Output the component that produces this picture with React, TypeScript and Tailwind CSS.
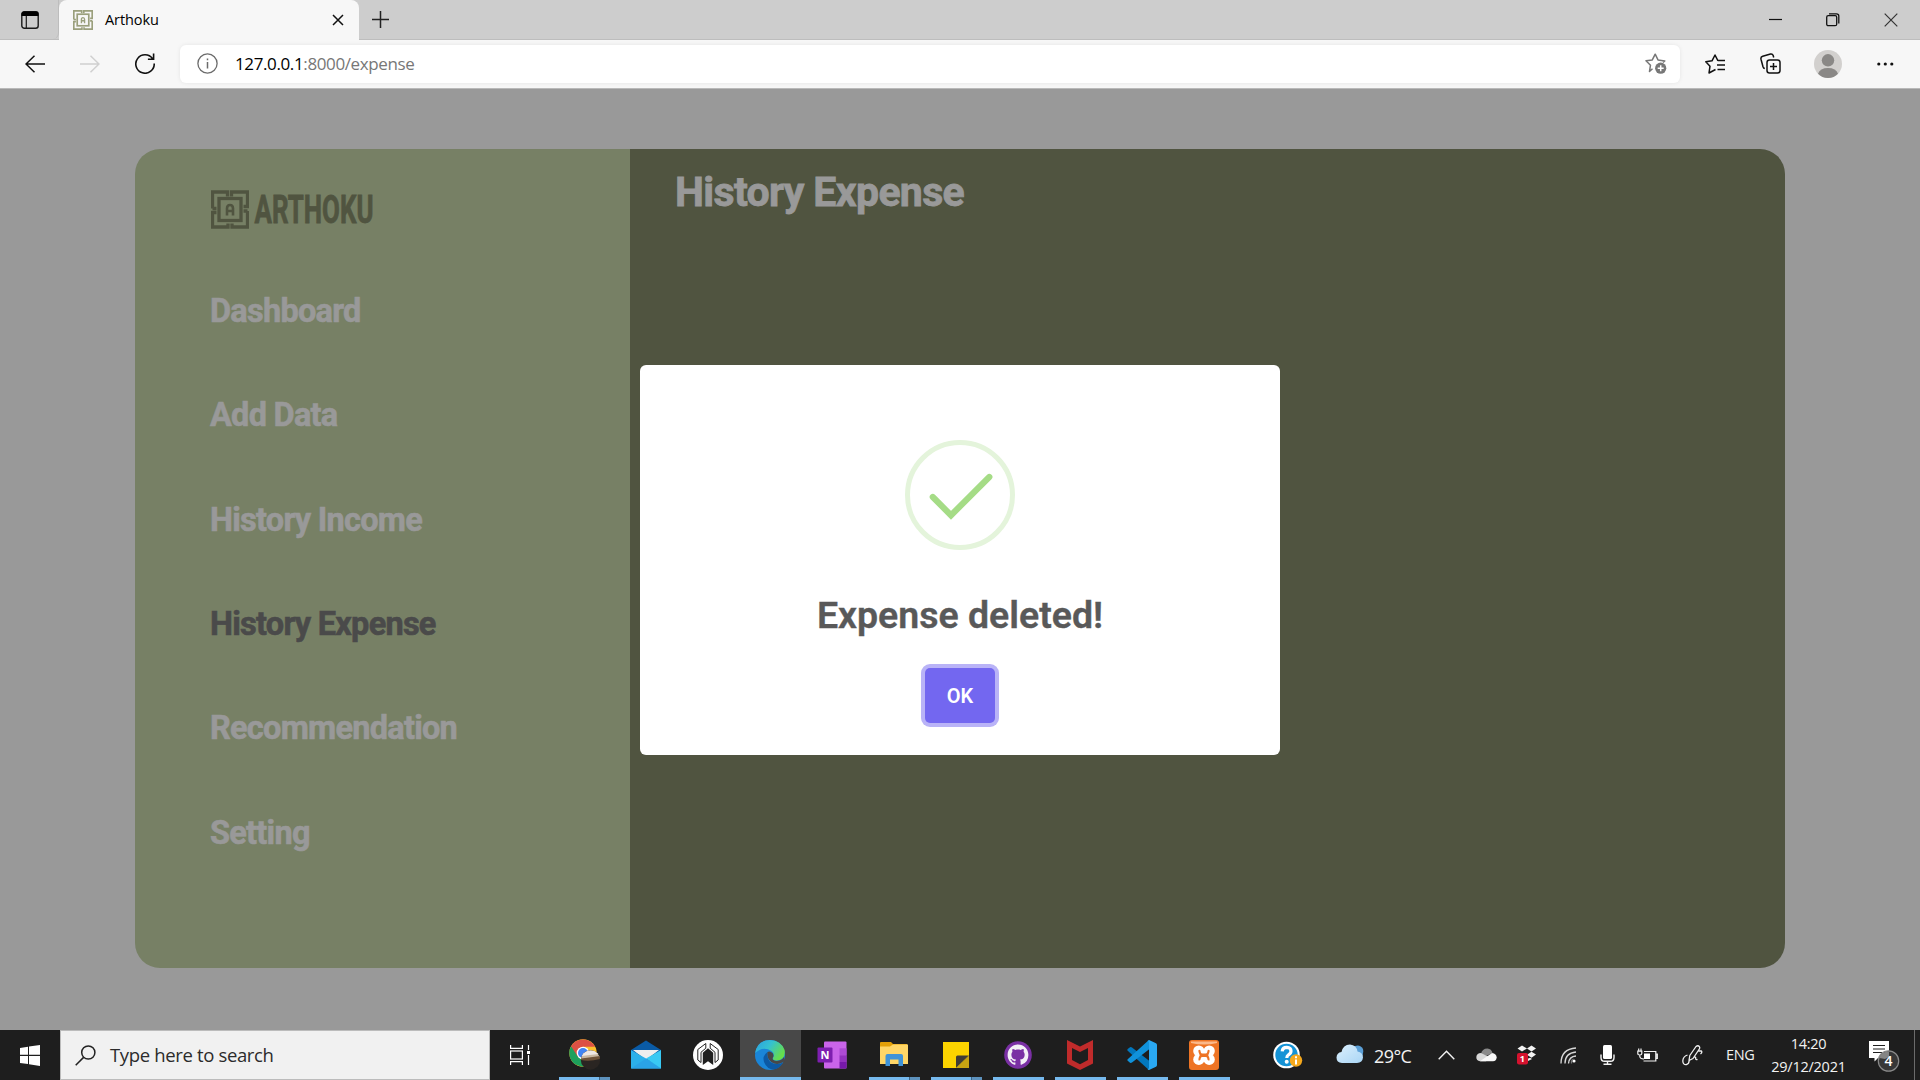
import type { ReactNode } from "react";

function MazeLogo({ className, stroke = 3.3 }: { className: string; stroke?: number }) {
  return (
    <svg viewBox="0 0 38 38" className={className} fill="none" stroke="currentColor" strokeWidth={stroke}>
      <path d="M1.5 18V1.5H16.5V6M1.5 18H5.5M20.5 6V1.5H36.5V16H32.5M36.5 20.5V36.5H21V33M36.5 20.5H32.5M17 33V36.5H1.5V22H5.5" />
      <rect x="8" y="8" width="22" height="22" />
      <path d="M16 25V18Q16 14.5 19 14.5Q22 14.5 22 18V25M16 20.5H22" strokeWidth="2.6" />
    </svg>
  );
}

function TabStrip() {
  return (
    <div className="flex h-10 bg-[#cdcdcd] border-b border-[#bdbdbd]">
      <div className="w-[59px] flex items-center pl-[21px] rounded-br-md border-r border-[#bdbdbd]">
        <svg width="18" height="18" viewBox="0 0 18 18" fill="none">
          <rect x="0.8" y="0.8" width="16.4" height="16.4" rx="2.5" stroke="#1a1a1a" strokeWidth="1.4" />
          <path d="M0.5 5V3Q0.5 0.5 3 0.5H15Q17.5 0.5 17.5 3V5Z" fill="#000" />
          <path d="M5.3 5V17" stroke="#1a1a1a" strokeWidth="1.2" />
        </svg>
      </div>
      <div className="w-[300px] h-10 shrink-0 bg-[#f7f7f7] rounded-t-lg flex items-center pl-[14px] pr-[15px]">
        <MazeLogo className="w-[20px] h-[20px] text-[#9a9f7c]" stroke={3.2} />
        <span className="ml-[12px] text-[14.5px] tracking-[-0.1px] text-black">Arthoku</span>
        <svg className="ml-auto" width="12" height="12" viewBox="0 0 12 12" stroke="#111" strokeWidth="1.5">
          <path d="M1 1L11 11M11 1L1 11" />
        </svg>
      </div>
      <svg className="ml-[12px] mt-[10px]" width="19" height="19" viewBox="0 0 19 19" stroke="#222" strokeWidth="1.5">
        <path d="M1 9.5H18M9.5 1V18" />
      </svg>
      <div className="ml-auto flex items-center pr-[22px] gap-[44px]">
        <svg width="13" height="13" viewBox="0 0 13 13" stroke="#111" strokeWidth="1.2">
          <path d="M0 6.5H13" />
        </svg>
        <svg width="14" height="14" viewBox="0 0 14 14" fill="none" stroke="#111" strokeWidth="1.3">
          <rect x="0.7" y="2.7" width="10" height="10" rx="1.5" />
          <path d="M3 0.8H10.5Q12.8 0.8 12.8 3V10.5" />
        </svg>
        <svg width="14" height="14" viewBox="0 0 14 14" stroke="#333" strokeWidth="1.2">
          <path d="M0.7 0.7L13.3 13.3M13.3 0.7L0.7 13.3" />
        </svg>
      </div>
    </div>
  );
}

function Toolbar() {
  return (
    <div className="flex items-center h-[49px] pb-px bg-[#f7f7f7] border-b border-[#b9b9b9]">
      <svg className="ml-[25px]" width="20" height="18" viewBox="0 0 20 18" fill="none" stroke="#111" strokeWidth="1.5">
        <path d="M20 9H1M9.5 0.8L1 9L9.5 17.2" />
      </svg>
      <svg className="ml-[35px]" width="20" height="18" viewBox="0 0 20 18" fill="none" stroke="#d0d0d0" strokeWidth="1.5">
        <path d="M0 9H19M10.5 0.8L19 9L10.5 17.2" />
      </svg>
      <svg className="ml-[35px]" width="20" height="21" viewBox="0 0 20 21" fill="none" stroke="#111" strokeWidth="1.6">
        <path d="M17.6 5.8A9.2 9.2 0 1 0 19.2 10.5M18.6 0.5V6.2H12.9" />
      </svg>
      <div className="ml-[25px] w-[1500px] h-[38px] rounded-md bg-white shadow-[0_0_4px_rgba(0,0,0,0.08)] flex items-center pl-[17px] pr-[13px]">
        <svg width="21" height="21" viewBox="0 0 21 21" fill="none" stroke="#6b6b6b" strokeWidth="1.3">
          <circle cx="10.5" cy="10.5" r="9.6" />
          <path d="M10.5 9V15.5M10.5 5.5V7.2" strokeWidth="1.5" />
        </svg>
        <span className="ml-[17px] text-[17px] tracking-[-0.38px] text-[#777] whitespace-nowrap">
          <span className="text-black">127.0.0.1</span>:8000/expense
        </span>
        <svg className="ml-auto" width="22" height="21" viewBox="0 0 22 21" fill="none" stroke="#777" strokeWidth="1.5" strokeLinejoin="round">
          <path d="M7.5 15.8L4.5 18.4L5.5 12.2L1 7.8L7.3 6.9L10.2 1.2L13 6.9L19.8 7.9L18 9.5" />
          <circle cx="15.7" cy="15.2" r="5.6" fill="#777" stroke="none" />
          <path d="M15.7 12.2V18.2M12.7 15.2H18.7" stroke="#fff" />
        </svg>
      </div>
      <svg className="ml-[25px]" width="21" height="20" viewBox="0 0 21 20" fill="none" stroke="#111" strokeWidth="1.5" strokeLinejoin="round">
        <path d="M10.5 15.5L4 19L5 12.2L0.8 7.8L7 6.8L10 1L13 6.8M13 6.6H20M12 11H20M12.5 15.4H20" />
      </svg>
      <svg className="ml-[34px]" width="21" height="21" viewBox="0 0 21 21" fill="none" stroke="#111" strokeWidth="1.5">
        <rect x="7" y="7" width="13" height="13" rx="2.5" />
        <path d="M13.5 10V17M10 13.5H17M4.8 15.5Q3.5 15.5 3 13.8L1 6.2Q0.5 4 2.7 3.3L10.5 1.1Q12.5 0.7 13.2 2.6L13.7 4.5" />
      </svg>
      <svg className="ml-[33px]" width="28" height="28" viewBox="0 0 28 28">
        <circle cx="14" cy="14" r="14" fill="#d2d0ce" />
        <circle cx="14" cy="10.3" r="6.2" fill="#8a8886" />
        <path d="M4 23.8Q6 18 14 18Q22 18 24 23.8Q20 28 14 28Q8 28 4 23.8Z" fill="#8a8886" />
      </svg>
      <svg className="ml-[35px]" width="17" height="4" viewBox="0 0 17 4" fill="#111">
        <circle cx="1.8" cy="2" r="1.6" />
        <circle cx="8.3" cy="2" r="1.6" />
        <circle cx="14.8" cy="2" r="1.6" />
      </svg>
    </div>
  );
}

const navItems = ["Dashboard", "Add Data", "History Income", "History Expense", "Recommendation", "Setting"];

function Page() {
  return (
    <main className="relative h-[941px] bg-[#999999] flex justify-center pt-[60px] font-[Roboto,sans-serif]">
      <div className="w-[1650px] h-[819px] flex rounded-[25px] overflow-hidden">
        <aside className="w-[495px] bg-[#778065] pl-[75px] pt-[40px]">
          <div className="flex items-center h-[40px] text-[#505440]">
            <MazeLogo className="w-[38px] h-[39px] ml-[1px]" />
            <svg className="ml-[5px] shrink-0 overflow-visible" width="126" height="60" viewBox="0 0 126 60">
              <text x="0.5" y="44.2" textLength="119" lengthAdjust="spacingAndGlyphs" fontFamily="Roboto, sans-serif" fontWeight="700" fontSize="39" fill="currentColor" stroke="currentColor" strokeWidth="0.8">
                ARTHOKU
              </text>
            </svg>
          </div>
          <nav className="mt-[30px]">
            {navItems.map((item) => (
              <a
                key={item}
                className={`flex items-center h-[104.4px] text-[32.5px] font-bold tracking-[-0.75px] whitespace-nowrap [-webkit-text-stroke:0.6px_currentColor] ${item === "History Expense" ? "text-[#4a4a4a]" : "text-[#999999]"}`}
              >
                {item}
              </a>
            ))}
          </nav>
        </aside>
        <section className="flex-1 bg-[#505440] pl-[45px] pt-[18px]">
          <h1 className="text-[41px] leading-[50px] font-bold tracking-[-0.65px] text-[#999999] [-webkit-text-stroke:0.8px_currentColor]">History Expense</h1>
        </section>
      </div>
      <div className="absolute inset-0 flex items-center justify-center">
        <div className="w-[640px] h-[390px] bg-white rounded-[6px] flex flex-col items-center">
          <svg className="mt-[75px]" width="110" height="110" viewBox="0 0 110 110" fill="none">
            <circle cx="55" cy="55" r="52.5" stroke="#e4f4db" strokeWidth="5" />
            <path d="M27.8 57L46 75.3L84.3 37" stroke="#a5dc86" strokeWidth="6.2" strokeLinecap="round" />
          </svg>
          <h2 className="mt-[42px] text-[37.5px] leading-[46px] font-semibold text-[#595959] whitespace-nowrap [-webkit-text-stroke:0.4px_currentColor]">Expense deleted!</h2>
          <button className="mt-[30px] w-[70px] h-[55px] pt-[2px] rounded-[5px] bg-[#7367f0] text-white text-[20px] font-semibold shadow-[0_0_0_4px_#b9b3f7]">
            OK
          </button>
        </div>
      </div>
    </main>
  );
}

function ChromeIcon() {
  return (
    <svg width="32" height="32" viewBox="0 0 32 32" className="ml-[2px]">
      <circle cx="14" cy="14" r="13.7" fill="#fbc02d" />
      <path d="M14 14L2.1 7.2A13.7 13.7 0 0 0 14 27.7L20 17Z" fill="#1da05c" />
      <path d="M2.1 7.2A13.7 13.7 0 0 1 26 7.8H14L9 18Z" fill="#dd5144" />
      <circle cx="14" cy="14" r="6.3" fill="#fff" />
      <circle cx="14" cy="14" r="5" fill="#4285f4" />
      <clipPath id="avatarClip"><circle cx="21.5" cy="21" r="9.7" /></clipPath>
      <g clipPath="url(#avatarClip)">
        <rect x="11" y="11" width="21" height="21" fill="#2a2522" />
        <path d="M11 20V11H32V18Q22 22 11 20Z" fill="#c9b8a2" />
        <path d="M13 15Q20 9 29 13L30 15Q20 16 13 17Z" fill="#eee8e4" />
        <path d="M12 19.5Q22 18 31 17V20Q20 23 12 21Z" fill="#6d5238" />
      </g>
    </svg>
  );
}

function MailIcon() {
  return (
    <svg width="30" height="29" viewBox="0 0 30 29" className="-mt-[2px]">
      <path d="M0 10L15 0.5L30 10V14H0Z" fill="#0a5ba6" />
      <path d="M2 10H28L15 20Z" fill="#eeeeee" />
      <path d="M0 10L15 18.5L30 27V28.5H0Z" fill="#2bb0ea" />
      <path d="M30 10L15 18.5L30 28.5Z" fill="#39c9f3" />
      <path d="M0 28.5L15 18.5L30 28.5Z" fill="#2aa3e6" />
    </svg>
  );
}

function HexIcon() {
  return (
    <svg width="30" height="30" viewBox="0 0 30 30" fill="none">
      <circle cx="15" cy="15" r="15" fill="#fff" />
      <path d="M12.8 3.5L4.8 9.5V20L8 22.5M8 22.5V12.3L12.8 8.2V3.5M17.2 3.5L25.2 9.5V20L22 22.5M22 22.5V12.3L17.2 8.2V3.5" stroke="#222" strokeWidth="1" strokeLinejoin="round" />
      <path d="M9.8 12.7L15 8.3L20.2 12.7V25L15 21.3L9.8 25Z" fill="#1f1f1f" />
    </svg>
  );
}

function EdgeIcon() {
  return (
    <svg width="30" height="30" viewBox="0 0 30 30">
      <defs>
        <linearGradient id="edgeTop" x1="0" y1="0" x2="1" y2="0.5">
          <stop offset="0" stopColor="#2b9fe3" />
          <stop offset="0.5" stopColor="#35c1d0" />
          <stop offset="1" stopColor="#66dd4c" />
        </linearGradient>
      </defs>
      <circle cx="15" cy="15" r="15" fill="#1a85d8" />
      <path d="M0.2 13Q2 0.2 15 0Q26 0.3 29.6 10Q31 19.5 22 20.5Q16.5 20.3 18.2 17.5Q20 13.5 16.5 11Q8 5.5 0.2 13Z" fill="url(#edgeTop)" />
      <path d="M12.5 12Q7 16 9 22Q12 29.5 19 29.5Q25 28.5 28 22.5Q22 25.5 16 22.5Q11.5 19 12.5 12Z" fill="#0c59a4" />
      <path d="M12.5 12Q15 10.5 18 13.5Q19.3 16 17.7 18Q17 20.5 22 21Q27 20.5 29 17L30 21L27.8 22.3Q22 25.5 16.5 22.3Q11.5 18.5 12.5 12Z" fill="#484848" />
    </svg>
  );
}

function OneNoteIcon() {
  return (
    <svg width="30" height="28" viewBox="0 0 30 28">
      <rect x="7" y="0.5" width="22.5" height="27" rx="1" fill="#ca64ea" />
      <rect x="22.5" y="7.3" width="7" height="7" fill="#ae4bd5" />
      <rect x="22.5" y="14.3" width="7" height="6.7" fill="#9332bf" />
      <path d="M22.5 21H29.5V27.5H22.5Z" fill="#7719aa" />
      <rect x="0.5" y="6.5" width="15" height="15" rx="1" fill="#7e1fb0" />
      <text x="8" y="18" textAnchor="middle" fontFamily="Open Sans, sans-serif" fontWeight="700" fontSize="11" fill="#fff">N</text>
    </svg>
  );
}

function ExplorerIcon() {
  return (
    <svg width="28" height="24" viewBox="0 0 28 24" className="-mt-[2px]">
      <path d="M0 1Q0 0 1 0H11L13 2H27V6H0Z" fill="#e3a008" />
      <path d="M0 4.5H10L13 2.5H28V22H0Z" fill="#ffd667" />
      <path d="M5.5 24V14Q5.5 12 7.5 12H21Q23 12 23 14V24H18.5V17.5H10V24Z" fill="#3f93d8" />
    </svg>
  );
}

function StickyIcon() {
  return (
    <svg width="26" height="26" viewBox="0 0 26 26">
      <path d="M0 0H26V13.5L13.5 26H0Z" fill="#fcd400" />
      <path d="M13 15Q13 13.5 14.5 13.5H26L13 26Z" fill="#3f3c35" />
      <path d="M26 13.5V26H13Z" fill="#c7a312" />
    </svg>
  );
}

function GitHubIcon() {
  return (
    <svg width="28" height="28" viewBox="0 0 28 28">
      <circle cx="14" cy="14" r="13.8" fill="#7a30a4" />
      <path
        transform="translate(3.6 3.6) scale(1.3)"
        fill="#f3eff6"
        d="M8 0C3.58 0 0 3.58 0 8c0 3.54 2.29 6.53 5.47 7.59.4.07.55-.17.55-.38 0-.19-.01-.82-.01-1.49-2.01.37-2.53-.49-2.69-.94-.09-.23-.48-.94-.82-1.13-.28-.15-.68-.52-.01-.53.63-.01 1.08.58 1.23.82.72 1.21 1.87.87 2.33.66.07-.52.28-.87.51-1.07-1.78-.2-3.64-.89-3.64-3.95 0-.87.31-1.59.82-2.15-.08-.2-.36-1.02.08-2.12 0 0 .67-.21 2.2.82.64-.18 1.32-.27 2-.27s1.36.09 2 .27c1.53-1.04 2.2-.82 2.2-.82.44 1.1.16 1.92.08 2.12.51.56.82 1.27.82 2.15 0 3.07-1.87 3.75-3.65 3.95.29.25.54.73.54 1.48 0 1.07-.01 1.93-.01 2.2 0 .21.15.46.55.38A8.01 8.01 0 0 0 16 8c0-4.42-3.58-8-8-8Z"
      />
    </svg>
  );
}

function McAfeeIcon() {
  return (
    <svg width="26" height="30" viewBox="0 0 26 30">
      <path d="M0 0L13 6.5L26 0V23.5L13 30L0 23.5ZM5 8V20L13 24.2L21 20V8L13 12Z" fill="#c02b2b" fillRule="evenodd" />
    </svg>
  );
}

function VSCodeIcon() {
  return (
    <svg width="30" height="30" viewBox="0 0 30 30">
      <path d="M1 8.8L3 7.2Q4 6.8 5 7.5L22.5 21V29.5L20.8 29L0.7 10.8Q-0.2 9.8 1 8.8Z" fill="#0277bd" />
      <path d="M1 21L3 22.8Q4 23.2 5 22.5L22.5 9V0.5L20.8 1L0.7 19.2Q-0.2 20.2 1 21Z" fill="#1092db" />
      <path d="M22 0L29 3.3Q30 3.8 30 5V25Q30 26.2 29 26.7L22 30Q21 30 20.5 29Q22 29 22 27.5V2.5Q22 1 20.5 1Z" fill="#2aa8f2" />
    </svg>
  );
}

function XamppIcon() {
  return (
    <svg width="30" height="30" viewBox="0 0 30 30">
      <rect width="30" height="30" rx="3" fill="#ee7424" />
      <path d="M2 1.5H28V3Q15 6 2 3Z" fill="#fbb98a" />
      <g fill="#fff">
        <circle cx="9.8" cy="11" r="5.6" />
        <circle cx="20.2" cy="11" r="5.6" />
        <circle cx="9.8" cy="19.4" r="5.6" />
        <circle cx="20.2" cy="19.4" r="5.6" />
        <rect x="9" y="10.5" width="12" height="9.5" />
      </g>
      <path d="M9.4 10.2Q11.5 9 11.8 12.2Q12 13.6 14 13.4H16Q18 13.6 18.2 12.2Q18.5 9 20.6 10.2Q21 12 19.3 15.2Q21 18.5 20.6 20.2Q18.5 21.4 18.2 18.2Q18 16.8 16 17H14Q12 16.8 11.8 18.2Q11.5 21.4 9.4 20.2Q9 18.5 10.7 15.2Q9 12 9.4 10.2Z" fill="#ee7424" />
    </svg>
  );
}

type Running = "none" | "single" | "stacked" | "active";

const apps: { id: string; icon: ReactNode; state: Running }[] = [
  { id: "chrome", icon: <ChromeIcon />, state: "stacked" },
  { id: "mail", icon: <MailIcon />, state: "none" },
  { id: "hex", icon: <HexIcon />, state: "none" },
  { id: "edge", icon: <EdgeIcon />, state: "active" },
  { id: "onenote", icon: <OneNoteIcon />, state: "none" },
  { id: "explorer", icon: <ExplorerIcon />, state: "stacked" },
  { id: "sticky", icon: <StickyIcon />, state: "stacked" },
  { id: "github", icon: <GitHubIcon />, state: "single" },
  { id: "mcafee", icon: <McAfeeIcon />, state: "single" },
  { id: "vscode", icon: <VSCodeIcon />, state: "single" },
  { id: "xampp", icon: <XamppIcon />, state: "single" },
];

function AppButton({ icon, state }: { icon: ReactNode; state: Running }) {
  return (
    <div className="w-[62px] h-[50px] pr-px">
      <div className={`h-full flex flex-col items-center ${state === "active" ? "bg-[#484848]" : ""}`}>
        <div className="h-[47px] pt-[3px] pr-[2px] flex items-center">{icon}</div>
        {state === "active" && <div className="w-full h-[3px] bg-[#76b9ed]" />}
        {state === "single" && <div className="w-[51px] h-[3px] bg-[#76b9ed]" />}
        {state === "stacked" && (
          <div className="flex w-[51px] h-[3px]">
            <div className="w-[40px] bg-[#76b9ed]" />
            <div className="w-px bg-[#3d6485]" />
            <div className="w-[10px] bg-[#5d92bd]" />
          </div>
        )}
      </div>
    </div>
  );
}

function Tray() {
  return (
    <div className="ml-auto flex items-center h-full text-[#f2f2f2]">
      <svg width="30" height="28" viewBox="0 0 30 28" className="overflow-visible">
        <circle cx="13.5" cy="14" r="13.3" fill="#fff" />
        <circle cx="13.5" cy="14" r="11.2" fill="#1593d6" />
        <path d="M9.2 10.3Q9.5 6.3 13.8 6.3Q18 6.5 18 10Q18 12.3 15.5 13.8Q13.8 15 13.8 17" fill="none" stroke="#fff" strokeWidth="3.2" />
        <circle cx="13.7" cy="20.8" r="2" fill="#fff" />
        <circle cx="23" cy="19.5" r="6.2" fill="#f5a81c" />
        <path d="M23 18.5V23.5M23 15.3V17.2" stroke="#fff" strokeWidth="2" />
      </svg>
      <svg className="ml-[33px] -mt-[2px]" width="28" height="20" viewBox="0 0 28 20">
        <defs>
          <linearGradient id="cloud" x1="0" y1="0" x2="1" y2="1">
            <stop offset="0" stopColor="#dcf0fd" />
            <stop offset="1" stopColor="#a9d5f5" />
          </linearGradient>
        </defs>
        <path d="M16 3Q24 -1 27 5Q28 10 25 14L16 12Z" fill="#5b9fd6" />
        <path d="M6 19Q0.5 18.5 0.5 13.5Q0.8 8.5 5.5 8Q7 0.8 14 0.5Q20.5 1 21.5 7.5Q27 8.5 27 13.5Q26.5 18.5 21 19Z" fill="url(#cloud)" />
      </svg>
      <span className="ml-[10px] w-[39px] pt-[1px] text-[18px] leading-[24px] tracking-[-0.6px] whitespace-nowrap">29°C</span>
      <svg className="ml-[25px] -mt-[1px]" width="17" height="10" viewBox="0 0 17 10" fill="none" stroke="#f2f2f2" strokeWidth="1.4">
        <path d="M0.7 9.3L8.5 1.2L16.3 9.3" />
      </svg>
      <svg className="ml-[21px]" width="21" height="14" viewBox="0 0 21 14">
        <path d="M5 6Q6 0.5 11.5 0.5Q15.5 0.8 16.5 5L10 8Z" fill="#8a8a8a" />
        <path d="M4 13.2Q0.3 12.8 0.3 9Q0.8 5 5 5L14 9.5L10 13.2Z" fill="#d8d8d8" />
        <path d="M4 13.3L16 5Q20.5 5.5 20.7 9.5Q20.4 13 17 13.3Z" fill="#f8f8f8" />
      </svg>
      <svg className="ml-[20px]" width="20" height="20" viewBox="0 0 20 20">
        <path d="M5 0.5L10 3.5L5 6.5L0.5 3.5ZM14.5 0.5L19 3.5L14.5 6.5L10 3.5ZM14.5 6.7L19 9.5L14.5 12.7L10 9.7ZM10 14L13 12.7L15 14L11 16Z" fill="#f2f2f2" />
        <rect x="0" y="8" width="11" height="11.5" rx="2" fill="#d5122e" />
        <text x="5.4" y="17" textAnchor="middle" fontFamily="Open Sans, sans-serif" fontWeight="700" fontSize="9" fill="#fff">1</text>
      </svg>
      <svg className="ml-[23px]" width="17" height="17" viewBox="0 0 17 17" fill="none" stroke="#d8d8d8" strokeWidth="1.3">
        <path d="M1 16.5Q1 2 16 1M5 16.5Q5 6 16 5M8.5 16.5Q9 9.5 16 9" />
        <circle cx="14" cy="14" r="1.6" fill="#fff" stroke="none" />
        <path d="M11.5 16.5V14Q12 12.5 13.5 12" stroke="#777" />
      </svg>
      <svg className="ml-[23px]" width="15" height="20" viewBox="0 0 15 20" fill="none" stroke="#f2f2f2" strokeWidth="1.4">
        <rect x="3" y="0" width="9" height="14" rx="1.5" fill="#fff" stroke="none" />
        <path d="M1 9.5V12.5Q1 16.3 4.5 16.3H10.5Q14 16.3 14 12.5V9.5M7.5 16.3V19M3.5 19.2H11.5" />
      </svg>
      <svg className="ml-[22px]" width="21" height="15" viewBox="0 0 21 15" fill="none" stroke="#f2f2f2" strokeWidth="1.2">
        <path d="M7 3.5H18.8V13H6.5M19 6V10.5H20.3V6Z" />
        <rect x="7" y="5.5" width="6" height="5.5" fill="#fff" stroke="none" />
        <path d="M0.8 3.2H4.8V5.5Q4.8 7 2.8 7Q0.8 7 0.8 5.5ZM1.7 0.5V3M4 0.5V3M2.8 7V8.5Q3 11 7 11" />
      </svg>
      <svg className="ml-[24px]" width="21" height="21" viewBox="0 0 21 21" fill="none" stroke="#f2f2f2" strokeWidth="1.3" strokeLinejoin="round">
        <path d="M7 15.5L7.8 10.5L14 1.5Q16 0 17.3 1.5Q18.3 3 17 4.5L11 13.5ZM5.5 10Q1 11.5 0.8 16Q1 20 4.5 19.5Q7 19 7.2 15.5M12.5 12.5Q14 11.5 13.7 13.5Q13.5 15 15.5 14.3M16.5 6H19.5Q20.5 7.5 18.5 9" />
      </svg>
      <span className="ml-[23px] w-[30px] text-[14.5px] tracking-[-0.4px] whitespace-nowrap">ENG</span>
      <div className="ml-[14px] w-[77px] text-center text-[14.5px] leading-[23px] tracking-[-0.25px] whitespace-nowrap">
        <div>14:20</div>
        <div>29/12/2021</div>
      </div>
      <svg className="ml-[22px] mt-[2px]" width="31" height="31" viewBox="0 0 31 31">
        <path d="M0 0H20V17H9L5.5 20.5V17H0Z" fill="#fff" />
        <path d="M4 4.5H16M4 8H16M4 11.5H13" stroke="#1f1f1f" strokeWidth="1.2" />
        <circle cx="19.5" cy="20" r="10.2" fill="#3a3a3a" fillOpacity="0.92" stroke="#8a8a8a" strokeWidth="1.2" />
        <path d="M10.3 17Q12 10.5 20 10.5V16L16 18Z" fill="#858585" />
        <text x="19.5" y="25" textAnchor="middle" fontFamily="Open Sans, sans-serif" fontWeight="600" fontSize="14" fill="#fff">4</text>
      </svg>
      <div className="ml-[14px] mr-[5px] w-px h-full bg-[#6b6b6b]" />
    </div>
  );
}

function Taskbar() {
  return (
    <footer className="h-[50px] bg-[#1e1e1e] flex items-center">
      <div className="w-[60px] flex justify-center">
        <svg width="20" height="21" viewBox="0 0 20 21" fill="#fff">
          <path d="M0 3L8 1.8V9.8H0ZM9 1.6L20 0V9.8H9ZM0 10.9H8V19L0 17.9ZM9 10.9H20V21L9 19.2Z" />
        </svg>
      </div>
      <div className="w-[430px] h-full bg-[#f1f1f1] border border-[#bcbcbc] flex items-center pl-[14px]">
        <svg width="21" height="21" viewBox="0 0 21 21" fill="none" stroke="#222" strokeWidth="1.5">
          <circle cx="13.3" cy="7.5" r="6.6" />
          <path d="M8.6 12.4L0.7 20.3" />
        </svg>
        <span className="ml-[14px] text-[18.5px] tracking-[-0.35px] text-[#2b2b2b] whitespace-nowrap">Type here to search</span>
      </div>
      <div className="w-[64px] pl-[20px]">
        <svg width="20" height="20" viewBox="0 0 20 20" fill="none" stroke="#fff" strokeWidth="1.2">
          <path d="M0.6 0V3.4H12.4V0M0.6 20V16.6H12.4V20M18.5 0V5M18.5 10V20" />
          <rect x="0.6" y="6" width="11.8" height="8" />
          <rect x="17" y="6" width="3" height="3" fill="#fff" stroke="none" />
        </svg>
      </div>
      {apps.map((app) => (
        <AppButton key={app.id} icon={app.icon} state={app.state} />
      ))}
      <Tray />
    </footer>
  );
}

export default function App() {
  return (
    <div className="w-[1920px] h-[1080px] overflow-hidden flex flex-col font-['Open_Sans',sans-serif]">
      <TabStrip />
      <Toolbar />
      <Page />
      <Taskbar />
    </div>
  );
}
